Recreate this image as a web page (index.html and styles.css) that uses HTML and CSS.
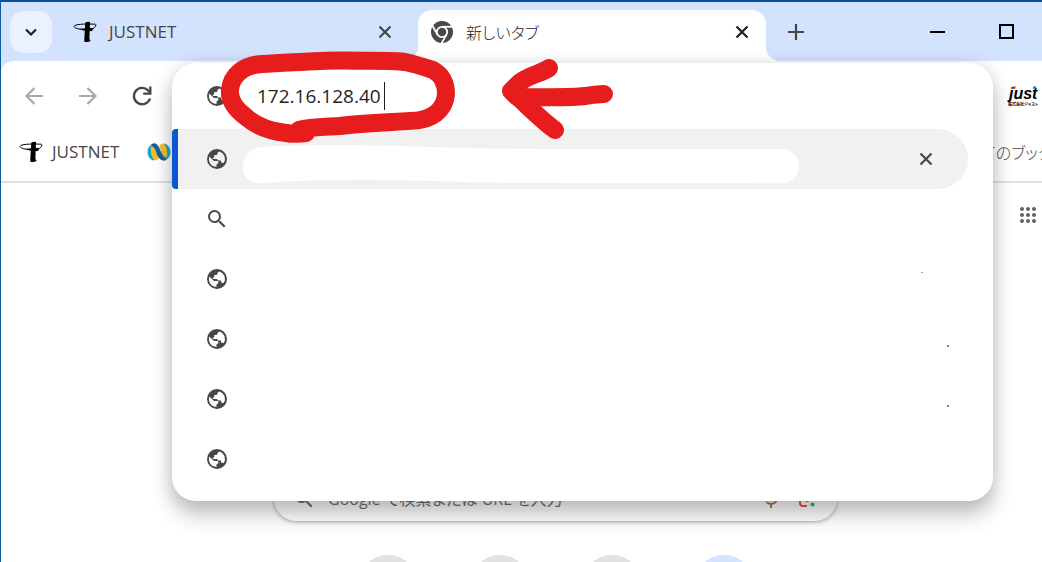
FILE: index.html
```html
<!DOCTYPE html>
<html lang="ja">
<head>
    <meta charset="UTF-8">
    <meta name="viewport" content="width=device-width, initial-scale=1.0">
    <title>新しいタブ</title>
    <link rel="stylesheet" href="styles.css">
</head>
<body>
    <svg class="symbols" aria-hidden="true">
        <symbol id="globe" viewBox="0 0 24 24">
            <path fill-rule="evenodd" d="M12 2a10 10 0 1 0 0 20 10 10 0 0 0 0-20zM7.500 11.200L9.300 10V8h2.500l1.200-2.700L14.500 4.400Q18 5.500 19.500 9q1.200 3.500-.7 7l-2.800-.5V13.500H13L12 12H8.500zM4.200 9.500l4.800 4.500h4l.5 2-2 1.500v2.500Q7 19.700 4.900 16.300 3.300 13 4.200 9.500z"/>
        </symbol>
        <symbol id="search" viewBox="0 0 24 24">
            <path d="M15.500 14h-.79l-.28-.27A6.470 6.470 0 0 0 16 9.500 6.500 6.500 0 1 0 9.500 16c1.610 0 3.090-.59 4.230-1.570l.27.28v.79l5 4.990L20.490 19l-4.990-5zm-6 0C7.010 14 5 11.990 5 9.500S7.010 5 9.500 5 14 7.010 14 9.500 11.990 14 9.500 14z"/>
        </symbol>
        <symbol id="close" viewBox="0 0 14 14">
            <path d="M1.500 1.500l11 11M12.500 1.500l-11 11" fill="none" stroke="currentColor" stroke-width="2.200"/>
        </symbol>
        <symbol id="justnet" viewBox="0 0 24 22">
            <path d="M12.300 1.500Q14.500.300 17 1l-.6 15.500q0 2.500 1.400 3.200-2 1.800-6 1.300-.8-.6-.5-3z"/>
            <path d="M9 8.300C4 8 1 6.800 1.200 5.300 1.800 3.300 10 2.700 22.500 3.200M18 8.500c3-.8 4.700-2.500 5-5" fill="none" stroke="currentColor" stroke-width="1"/>
            <path d="M6.500 8Q10 7 18 7.200L18.500 9.800Q11 10.800 6.500 8z"/>
            <circle cx="18" cy="8.500" r="1.800"/>
        </symbol>
    </svg>

    <div class="browser">
        <header class="tab-strip">
            <button class="tab-search" aria-label="タブを検索">
                <svg width="14" height="14" viewBox="0 0 14 14"><path d="M2 4.500l5 5 5-5" fill="none" stroke="currentColor" stroke-width="2.200"/></svg>
            </button>
            <div class="tab">
                <svg class="logo" width="24" height="22"><use href="#justnet"/></svg>
                <span class="tab-title">JUSTNET</span>
                <button class="icon-button" aria-label="タブを閉じる"><svg width="14" height="14"><use href="#close"/></svg></button>
            </div>
            <div class="tab active">
                <svg class="chrome-icon" width="24" height="24" viewBox="0 0 24 24">
                    <circle cx="12" cy="12" r="11" fill="#474a4d"/>
                    <g fill="none" stroke="#fff" stroke-width="1.800">
                        <circle cx="12" cy="12" r="5.200"/>
                        <path d="M12 6.800h11"/>
                        <path d="M12 6.800h11" transform="rotate(120 12 12)"/>
                        <path d="M12 6.800h11" transform="rotate(240 12 12)"/>
                    </g>
                </svg>
                <span class="tab-title japanese">新しいタブ</span>
                <button class="icon-button" aria-label="タブを閉じる"><svg width="14" height="14"><use href="#close"/></svg></button>
            </div>
            <button class="icon-button new-tab" aria-label="新しいタブを開く">
                <svg width="16" height="16" viewBox="0 0 16 16"><path d="M8 0v16M0 8h16" stroke="currentColor" stroke-width="2.200"/></svg>
            </button>
            <div class="window-buttons">
                <button class="icon-button" aria-label="最小化"><svg width="16" height="16" viewBox="0 0 16 16"><path d="M0 8h15" stroke="currentColor" stroke-width="2"/></svg></button>
                <button class="icon-button" aria-label="最大化"><svg width="16" height="16" viewBox="0 0 16 16"><path d="M1 1h13v13H1z" fill="none" stroke="currentColor" stroke-width="2"/></svg></button>
            </div>
        </header>

        <div class="chrome-bars">
            <nav class="toolbar">
                <button class="icon-button dim" aria-label="戻る">
                    <svg width="20" height="20" viewBox="0 0 20 20"><path d="M19 10H3M10.500 2l-8 8 8 8" fill="none" stroke="currentColor" stroke-width="2.200"/></svg>
                </button>
                <button class="icon-button dim" aria-label="進む">
                    <svg width="20" height="20" viewBox="0 0 20 20"><path d="M1 10h16M9.500 2l8 8-8 8" fill="none" stroke="currentColor" stroke-width="2.200"/></svg>
                </button>
                <button class="icon-button" aria-label="再読み込み">
                    <svg width="20" height="20" viewBox="0 0 20 20"><path d="M18 12.500A8.200 8.200 0 1 1 16 4.300L18 6.500" fill="none" stroke="currentColor" stroke-width="2.400"/><path d="M19.500.5v8.300h-8.300V6.500h6V.5z"/></svg>
                </button>
                <a class="extension" href="#" aria-label="just">
                    <svg width="32" height="24" viewBox="0 0 32 24">
                        <text class="just-name" x="2" y="15">just</text>
                        <path d="M5.700 2.500h3l-.5 2.300h-3z" fill="#e8202a"/>
                        <path d="M26.300 2.500h3l-.5 2.300h-3z" fill="#1a78d0"/>
                        <text class="just-company" x="1" y="22">株式会社ジャスト</text>
                    </svg>
                </a>
            </nav>
            <nav class="bookmarks">
                <a href="#">
                    <svg class="logo" width="24" height="22"><use href="#justnet"/></svg>
                    <span>JUSTNET</span>
                </a>
                <a href="#" aria-label="ブックマーク">
                    <svg width="24" height="20" viewBox="0 0 24 20">
                        <path d="M6 1.500Q.5 4 .5 10T6 18.500L9 17 8 3z" fill="#1c9fcb"/>
                        <path d="M4 4Q8 5 9 9l3 7q-2 3-5 2Q3 13 4 4z" fill="#f7bd24"/>
                        <path d="M18 1.500Q23.500 4 23.500 10T18 18.500L15 17 14 4z" fill="#1c9fcb"/>
                        <path d="M12 4q2-3 5-2.500 4 5 3 13.500-4 0-5-4z" fill="#f7bd24"/>
                        <path d="M4 3Q7 0 10 2.500 13 6 14.500 11T20 17q-3 3-6.500.5Q10.500 15 9 9.500 7.500 4.500 4 3z" fill="#1d5b96"/>
                    </svg>
                </a>
                <a class="all-bookmarks japanese" href="#">すべてのブックマーク</a>
            </nav>
        </div>

        <main class="page">
            <button class="icon-button apps" aria-label="Google アプリ">
                <svg width="16" height="16" viewBox="0 0 16 16" fill="#5f6368">
                    <circle cx="2" cy="2" r="2"/><circle cx="8" cy="2" r="2"/><circle cx="14" cy="2" r="2"/>
                    <circle cx="2" cy="8" r="2"/><circle cx="8" cy="8" r="2"/><circle cx="14" cy="8" r="2"/>
                    <circle cx="2" cy="14" r="2"/><circle cx="8" cy="14" r="2"/><circle cx="14" cy="14" r="2"/>
                </svg>
            </button>
            <div class="start">
                <form class="search-box">
                    <svg width="24" height="24" fill="#5f6368"><use href="#search"/></svg>
                    <input type="text" aria-label="検索" placeholder="Google で検索または URL を入力">
                    <button type="button" class="icon-button" aria-label="音声で検索">
                        <svg width="20" height="24" viewBox="0 0 20 24" fill="none" stroke-width="2">
                            <path d="M10 4v8" stroke="#4285f4" stroke-width="5" stroke-linecap="round"/>
                            <path d="M4 11q0 3 2 4.500" stroke="#fbbc04"/>
                            <path d="M6 15.500q4 3 8 0 2-1.500 2-4.500" stroke="#ea4335"/>
                            <path d="M10 17v4" stroke="#34a853"/>
                        </svg>
                    </button>
                    <button type="button" class="icon-button" aria-label="画像で検索">
                        <svg width="20" height="24" viewBox="0 0 20 24" fill="none" stroke-width="2">
                            <path d="M3 10V7q0-3 3-3h8q3 0 3 3v3" stroke="#4285f4"/>
                            <path d="M3 13v3q0 3 3 3h4" stroke="#ea4335"/>
                            <circle cx="10" cy="12" r="3" fill="#4285f4"/>
                            <circle cx="15.500" cy="17.500" r="2" fill="#34a853"/>
                        </svg>
                    </button>
                </form>
                <div class="shortcuts">
                    <a href="#" aria-label="ショートカット 1"></a>
                    <a href="#" aria-label="ショートカット 2"></a>
                    <a href="#" aria-label="ショートカット 3"></a>
                    <a class="add" href="#" aria-label="ショートカットを追加"></a>
                </div>
            </div>
        </main>

        <section class="omnibox">
            <div class="address">
                <svg class="icon"><use href="#globe"/></svg>
                <input type="text" aria-label="アドレス" value="172.16.128.40">
                <span class="caret"></span>
            </div>
            <ul class="suggestions">
                <li class="selected">
                    <svg class="icon"><use href="#globe"/></svg>
                    <svg class="blank" width="557" height="40" viewBox="243 145 557 40">
                        <path d="M262 183C236 185 236 150 262 147 300 144 400 145 460 148 500 149 600 149 782 149 805 150 805 182 782 183.500 700 183 520 184 460 182 400 180 330 178 262 183z"/>
                    </svg>
                    <button class="icon-button remove" aria-label="候補を削除"><svg width="14" height="14"><use href="#close"/></svg></button>
                </li>
                <li><svg class="icon"><use href="#search"/></svg></li>
                <li><svg class="icon"><use href="#globe"/></svg><span class="speck light"></span></li>
                <li><svg class="icon"><use href="#globe"/></svg><span class="speck"></span></li>
                <li><svg class="icon"><use href="#globe"/></svg><span class="speck"></span></li>
                <li><svg class="icon"><use href="#globe"/></svg></li>
            </ul>
        </section>

        <!-- red pen marks around the address -->
        <svg class="marks" width="420" height="100" viewBox="210 45 420 100" aria-hidden="true">
            <path d="M306 133C298 134 292 134 286 133 268 131 255 125 246 117 234 108 229 100 230 90 231 76 243 65 262 64 290 63 320 60 345 60.500 370 61 393 60 405 62 415 64 424 67 433 70 442 75 446 84 446 94 445 106 437 117 420 120 408 122 365 122 340 126 325 127 310 127 299 130"/>
            <path d="M549 68C543 73 528 75 519 83L511 91 517 97C545 97 570 98 585 96 592 95 598 94 604 94M511 91C526 104 540 119 555 130"/>
        </svg>
    </div>
</body>
</html>
```
FILE: styles.css
```css
* {
    box-sizing: border-box;
}
body {
    margin: 0;
    font-family: 'Open Sans', 'Noto Sans CJK JP', sans-serif;
    font-size: 17px;
    color: #474747;
    background-color: #ffffff;
}
a {
    color: inherit;
    text-decoration: none;
}
button {
    padding: 0;
    border: none;
    background: none;
    color: inherit;
    cursor: pointer;
}
input {
    padding: 0;
    border: none;
    outline: none;
    background: none;
    font-family: inherit;
}
svg {
    display: block;
    flex: none;
}
.symbols {
    display: none;
}
.browser {
    position: relative;
    display: flex;
    flex-direction: column;
    height: 100vh;
    overflow: hidden;
    border-top: 2px solid #0a5096;
    border-left: 1px solid #0a5ba0;
    background-color: #d3e2fd;
}
.icon-button {
    display: flex;
    align-items: center;
    justify-content: center;
    flex: none;
    width: 24px;
    height: 24px;
}
.logo {
    color: #000000;
}
.japanese {
    font-size: 16px;
    font-weight: 300;
    font-feature-settings: "palt";
}

/* tabs */
.tab-strip {
    display: flex;
    align-items: center;
    flex: none;
    height: 59px;
    padding-left: 9px;
}
.tab-search {
    display: flex;
    align-items: center;
    justify-content: center;
    width: 42px;
    height: 42px;
    border-radius: 14px;
    background-color: #ebf1fe;
    color: #1f1f1f;
}
.tab {
    display: flex;
    align-items: center;
    flex: 0 1 348px;
    gap: 12px;
    padding: 0 12px;
}
.tab:not(.active) {
    flex-basis: 366px;
    padding: 0 21px;
}
.tab-title {
    flex: 1;
}
.tab.active {
    position: relative;
    align-self: flex-end;
    height: 51px;
    padding-bottom: 8px;
    border-radius: 14px 14px 0 0;
    background-color: #ffffff;
    color: #1f1f1f;
}
.tab.active::before,
.tab.active::after {
    content: "";
    position: absolute;
    bottom: 0;
    width: 14px;
    height: 14px;
}
.tab.active::before {
    right: 100%;
    background: radial-gradient(circle at 0 0, transparent 14px, #ffffff 14px);
}
.tab.active::after {
    left: 100%;
    background: radial-gradient(circle at 100% 0, transparent 14px, #ffffff 14px);
}
.new-tab {
    margin-left: 18px;
}
.window-buttons {
    display: flex;
    gap: 45px;
    margin-left: auto;
    padding-right: 23px;
    color: #000000;
}

/* toolbar and bookmarks */
.chrome-bars {
    flex: none;
    border-bottom: 2px solid #dedfe0;
    border-radius: 12px 0 0 0;
    background-color: #ffffff;
}
.toolbar {
    display: flex;
    align-items: center;
    gap: 30px;
    height: 69px;
    padding: 0 3px 0 21px;
    fill: currentColor;
}
.dim {
    color: #a9a9a9;
}
.extension {
    margin-left: auto;
    fill: #000000;
}
.just-name {
    font: italic bold 16px 'Liberation Sans', sans-serif;
}
.just-company {
    font: bold 4px 'Noto Sans CJK JP', sans-serif;
    font-feature-settings: "palt";
}
.bookmarks {
    display: flex;
    align-items: center;
    gap: 28px;
    height: 51px;
    padding: 0 0 8px 18px;
    overflow: hidden;
}
.bookmarks a {
    display: flex;
    align-items: center;
    gap: 9px;
}
.bookmarks .all-bookmarks {
    width: 90px;
    margin-left: auto;
    white-space: nowrap;
}

/* new tab page */
.page {
    flex: 1;
    min-height: 0;
    background-color: #ffffff;
}
.apps {
    margin: 20px 2px 0 auto;
}
.start {
    display: flex;
    flex-direction: column;
    align-items: center;
    gap: 34px;
    padding: 250px 0 0 68px;
}
.search-box {
    display: flex;
    align-items: center;
    gap: 12px;
    width: 100%;
    max-width: 563px;
    height: 44px;
    padding: 0 18px;
    border-radius: 22px;
    background-color: #ffffff;
    box-shadow: 0 1px 4px rgba(32, 33, 36, 0.4);
}
.search-box input {
    flex: 1;
    min-width: 0;
    font-size: 16px;
    font-feature-settings: "palt";
}
.search-box input::placeholder {
    color: #5f6368;
}
.shortcuts {
    display: flex;
    gap: 52px;
}
.shortcuts a {
    width: 60px;
    height: 60px;
    border-radius: 50%;
    background-color: #e1e3e1;
}
.shortcuts .add {
    background-color: #d3e3fd;
}

/* address suggestions */
.omnibox {
    position: absolute;
    top: 61px;
    left: 171px;
    right: 49px;
    padding-bottom: 12px;
    border-radius: 24px;
    background-color: #ffffff;
    box-shadow: 0 0 16px rgba(60, 64, 67, 0.15), 0 14px 20px rgba(60, 64, 67, 0.3);
}
.icon {
    width: 24px;
    height: 24px;
    fill: #474747;
}
.address {
    display: flex;
    align-items: center;
    height: 66px;
    padding-left: 33px;
}
.address input {
    width: 127px;
    margin-left: 28px;
    font-size: 19px;
    color: #1f1f1f;
}
.caret {
    width: 1px;
    height: 28px;
    background-color: #1f1f1f;
}
.suggestions {
    margin: 0;
    padding: 0;
    list-style: none;
}
.suggestions li {
    display: flex;
    align-items: center;
    height: 60px;
    margin-right: 25px;
    padding-left: 33px;
}
.suggestions .selected {
    padding-left: 27px;
    border-left: 6px solid #0b57d0;
    border-radius: 4px 30px 30px 4px;
    background-color: #f1f1f1;
}
.blank {
    align-self: flex-end;
    flex: 0 1 auto;
    margin: 0 0 4px 14px;
    fill: #ffffff;
}
.remove {
    margin: 0 30px 0 auto;
}
.speck {
    width: 2px;
    height: 2px;
    margin: 14px 19px 0 auto;
    background-color: #5c86b8;
}
.speck.light {
    margin: 0 45px 14px auto;
    height: 1px;
    background-color: #7db0ea;
}

/* pen marks */
.marks {
    position: absolute;
    top: 43px;
    left: 209px;
    fill: none;
    stroke: #e71d1d;
    stroke-width: 18px;
    stroke-linecap: round;
    stroke-linejoin: round;
    pointer-events: none;
}
```
